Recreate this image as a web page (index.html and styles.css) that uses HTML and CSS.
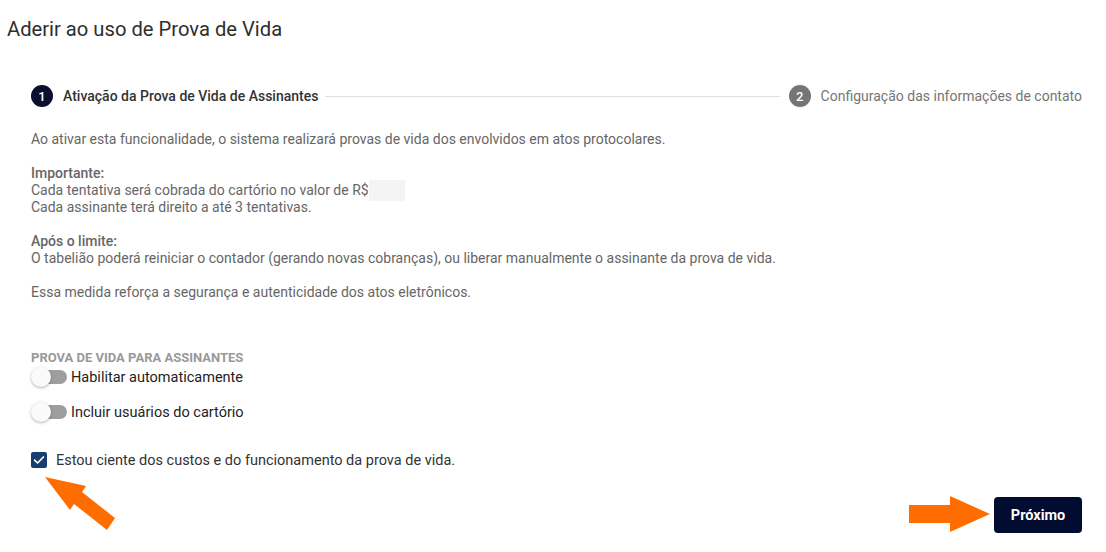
FILE: index.html
```html
<!DOCTYPE html>
<html lang="pt-BR">
<head>
<meta charset="utf-8">
<title>Aderir ao uso de Prova de Vida</title>
<link rel="stylesheet" href="styles.css">
</head>
<body>
<div class="page">
  <h1 class="title">Aderir ao uso de Prova de Vida</h1>

  <div class="stepper">
    <div class="step active">
      <span class="step-num">1</span>
      <span class="step-label">Ativação da Prova de Vida de Assinantes</span>
    </div>
    <div class="step-line"></div>
    <div class="step">
      <span class="step-num">2</span>
      <span class="step-label">Configuração das informações de contato</span>
    </div>
  </div>

  <div class="content">
    <p>Ao ativar esta funcionalidade, o sistema realizará provas de vida dos envolvidos em atos protocolares.</p>
    <p><strong>Importante:</strong><br>Cada tentativa será cobrada do cartório no valor de R$ <span class="blur"></span><br>Cada assinante terá direito a até 3 tentativas.</p>
    <p><strong>Após o limite:</strong><br>O tabelião poderá reiniciar o contador (gerando novas cobranças), ou liberar manualmente o assinante da prova de vida.</p>
    <p>Essa medida reforça a segurança e autenticidade dos atos eletrônicos.</p>

    <div class="section-label">PROVA DE VIDA PARA ASSINANTES</div>
    <label class="toggle-row">
      <span class="toggle"><span class="track"></span><span class="thumb"></span></span>
      <span class="toggle-text">Habilitar automaticamente</span>
    </label>
    <label class="toggle-row second">
      <span class="toggle"><span class="track"></span><span class="thumb"></span></span>
      <span class="toggle-text">Incluir usuários do cartório</span>
    </label>

    <label class="check-row">
      <span class="checkbox">
        <svg viewBox="0 0 16 16" width="16" height="16"><path d="M3.6 8.2 L6.6 11 L12.4 5" fill="none" stroke="#fff" stroke-width="1.7" stroke-linecap="round" stroke-linejoin="round"/></svg>
      </span>
      <span class="check-text">Estou ciente dos custos e do funcionamento da prova de vida.</span>
    </label>
  </div>

  <div class="actions">
    <button class="btn-next">Próximo</button>
  </div>

  <svg class="annot" width="1106" height="552" viewBox="0 0 1106 552">
    <polygon points="45,477 86,486 82,492 115,518 107,530 74,504 70,510" fill="#ff6d00"/>
    <polygon points="909,505 950,505 950,496 990,514 950,532 950,523 909,523" fill="#ff6d00"/>
  </svg>
</div>
</body>
</html>
```

FILE: styles.css
```css
* { box-sizing: border-box; }
html, body { margin: 0; padding: 0; background: #fff; }
body {
  font-family: Roboto, "Liberation Sans", Arial, sans-serif;
  width: 1106px;
  height: 552px;
  overflow: hidden;
}
.page { position: relative; width: 1106px; height: 552px; }

.title {
  margin: 0;
  padding: 17px 7px 0;
  font-size: 20.2px;
  line-height: 24px;
  font-weight: 400;
  color: #2e2e2e;
}

.stepper {
  display: flex;
  align-items: center;
  margin-top: 44px;
  padding: 0 24px 0 31px;
  height: 22px;
}
.step { display: flex; align-items: center; gap: 10px; }
.step-num {
  width: 22px; height: 22px;
  border-radius: 50%;
  background: #757575;
  color: #fff;
  font-size: 13px;
  font-weight: 500;
  display: flex; align-items: center; justify-content: center;
}
.step.active .step-num { background: #0a0f30; }
.step-label { font-size: 14px; color: #757575; }
.step.active .step-label { color: #333; font-weight: 500; }
.step-line { flex: 1; height: 1px; background: #e0e0e0; margin: 0 9px 0 7px; }

.content {
  margin-top: 24px;
  padding: 0 31px;
  font-size: 14px;
  line-height: 17px;
  color: #666;
}
.content p { margin: 0 0 17px; }
.content strong { font-weight: 500; }
.blur {
  display: inline-block;
  width: 36px; height: 17px;
  background: #f4f4f4;
  vertical-align: top;
  margin-left: -3px;
  box-shadow: 0 2px 0 #f4f4f4, 0 -2px 0 #f4f4f4;
}

.section-label {
  margin-top: 50px;
  font-size: 13px;
  line-height: 14px;
  font-weight: 700;
  color: #999;
}

.toggle-row {
  display: flex;
  align-items: center;
  height: 24px;
  gap: 4px;
  color: #222;
  font-size: 14.5px;
}
.toggle-row.second { margin-top: 11px; }
.toggle { position: relative; width: 36px; height: 20px; }
.track {
  position: absolute; left: 3px; right: 0; top: 3px; height: 14px;
  border-radius: 7px;
  background: #9e9e9e;
}
.thumb {
  position: absolute; left: 0; top: 0;
  width: 20px; height: 20px; border-radius: 50%;
  background: #fafafa;
  box-shadow: 0 1px 3px rgba(0,0,0,0.3);
}

.check-row {
  display: flex;
  align-items: center;
  gap: 9px;
  height: 24px;
  margin-top: 24px;
  color: #333;
  font-size: 14.5px;
}
.checkbox {
  width: 16px; height: 16px;
  border-radius: 2px;
  background: #173e6e;
  display: flex;
}

.actions {
  display: flex;
  justify-content: flex-end;
  padding: 0 24px;
  margin-top: 25px;
}
.btn-next {
  width: 88px; height: 36px;
  border: 0;
  border-radius: 4px;
  background: #020b30;
  color: #fff;
  font-family: Roboto, "Liberation Sans", Arial, sans-serif;
  font-size: 14.5px;
  font-weight: 700;
}

.annot { position: absolute; left: 0; top: 0; pointer-events: none; }
```
